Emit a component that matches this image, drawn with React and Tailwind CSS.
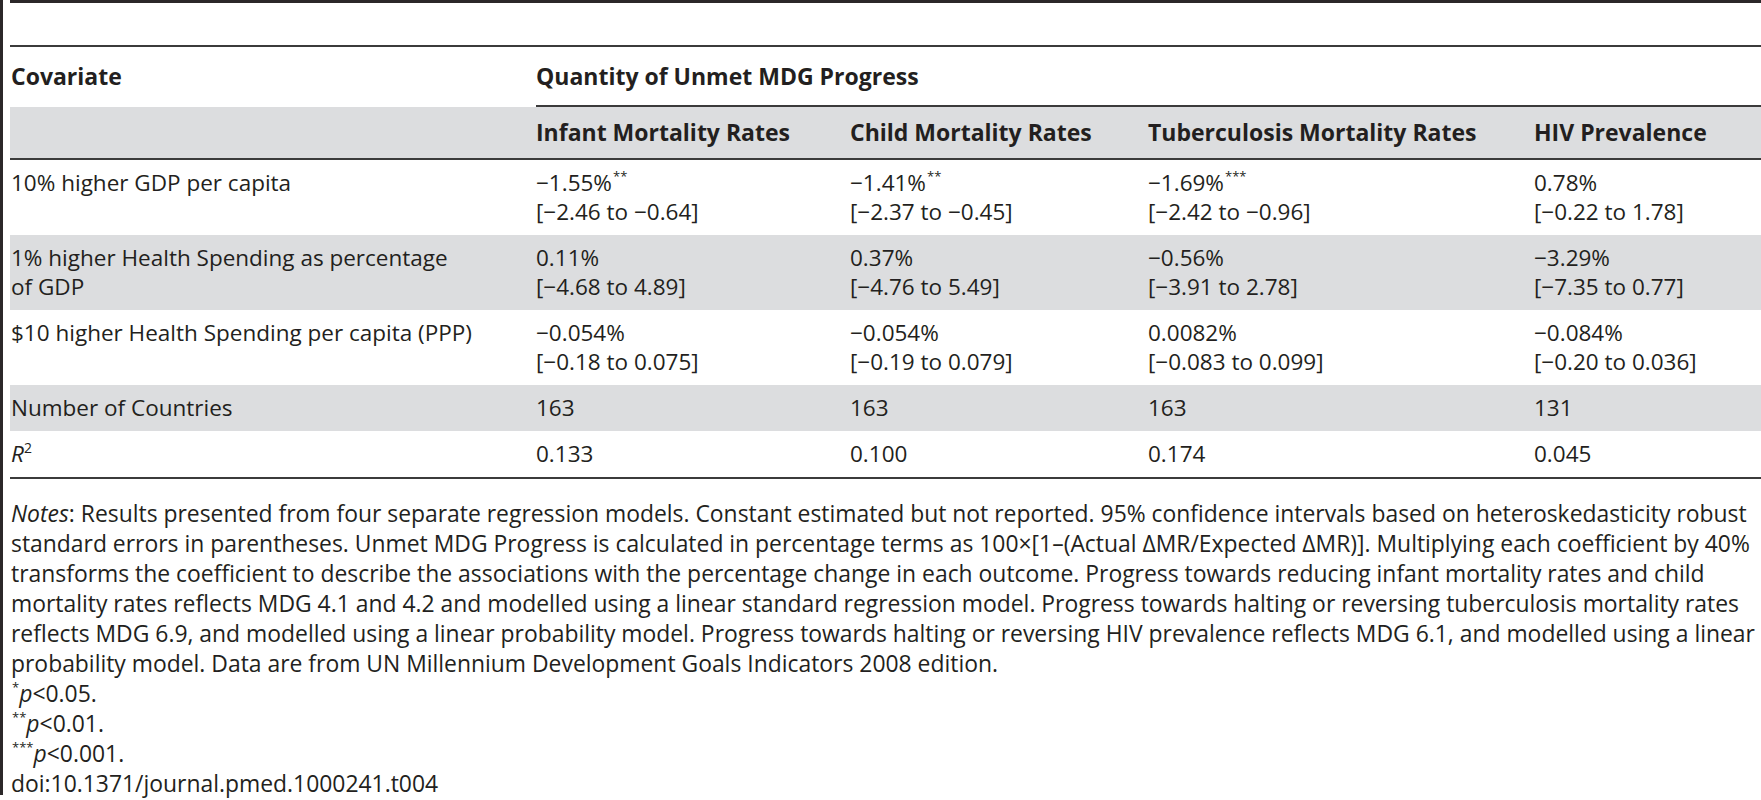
import React from 'react';

const cols = 'grid grid-cols-[526px_314px_298px_386px_1fr]';

const rows = [
  {
    label: ['10% higher GDP per capita'],
    shade: false,
    cells: [
      { v: '−1.55%', sup: '**', ci: '[−2.46 to −0.64]' },
      { v: '−1.41%', sup: '**', ci: '[−2.37 to −0.45]' },
      { v: '−1.69%', sup: '***', ci: '[−2.42 to −0.96]' },
      { v: '0.78%', ci: '[−0.22 to 1.78]' },
    ],
  },
  {
    label: ['1% higher Health Spending as percentage', 'of GDP'],
    shade: true,
    cells: [
      { v: '0.11%', ci: '[−4.68 to 4.89]' },
      { v: '0.37%', ci: '[−4.76 to 5.49]' },
      { v: '−0.56%', ci: '[−3.91 to 2.78]' },
      { v: '−3.29%', ci: '[−7.35 to 0.77]' },
    ],
  },
  {
    label: ['$10 higher Health Spending per capita (PPP)'],
    shade: false,
    cells: [
      { v: '−0.054%', ci: '[−0.18 to 0.075]' },
      { v: '−0.054%', ci: '[−0.19 to 0.079]' },
      { v: '0.0082%', ci: '[−0.083 to 0.099]' },
      { v: '−0.084%', ci: '[−0.20 to 0.036]' },
    ],
  },
];

const notes = [
  'standard errors in parentheses. Unmet MDG Progress is calculated in percentage terms as 100×[1–(Actual ΔMR/Expected ΔMR)]. Multiplying each coefficient by 40%',
  'transforms the coefficient to describe the associations with the percentage change in each outcome. Progress towards reducing infant mortality rates and child',
  'mortality rates reflects MDG 4.1 and 4.2 and modelled using a linear standard regression model. Progress towards halting or reversing tuberculosis mortality rates',
  'reflects MDG 6.9, and modelled using a linear probability model. Progress towards halting or reversing HIV prevalence reflects MDG 6.1, and modelled using a linear',
  'probability model. Data are from UN Millennium Development Goals Indicators 2008 edition.',
];

function Sup({ children }) {
  return <sup className="text-[13px] -top-[10px] ml-[1px]">{children}</sup>;
}

export default function App() {
  return (
    <div className="w-[1761px] h-[800px] bg-white flex overflow-hidden font-['Open_Sans',sans-serif] text-[#231f20]">
      <div className="w-[3px] h-[795px] bg-[#2b2829] shrink-0" />
      <div className="ml-[7px] flex-1 flex flex-col min-w-0">
        <div className="h-[3px] bg-[#2b2829]" />

        {/* Table */}
        <div className="mt-[42px] border-t-2 border-[#3b3b3b] text-[22.5px] leading-[29px]">
          <div className={`${cols} text-[23px]`}>
            <div className="pl-[1px] pt-[15px] pb-[14px] font-bold">Covariate</div>
            <div className="col-span-4 pt-[15px] pb-[14px] font-bold border-b-2 border-[#3b3b3b]">
              Quantity of Unmet MDG Progress
            </div>
          </div>
          <div className={`${cols} bg-[#dcdddf] border-b-2 border-[#3b3b3b] font-bold text-[23px]`}>
            <div className="py-[11px]" />
            <div className="py-[11px]">Infant Mortality Rates</div>
            <div className="py-[11px]">Child Mortality Rates</div>
            <div className="py-[11px]">Tuberculosis Mortality Rates</div>
            <div className="py-[11px]">HIV Prevalence</div>
          </div>

          {rows.map((r, i) => (
            <div key={i} className={`${cols} ${r.shade ? 'bg-[#dcdddf]' : ''}`}>
              <div className="pl-[1px] pt-[8px] pb-[9px]">
                {r.label.map((l) => (
                  <div key={l}>{l}</div>
                ))}
              </div>
              {r.cells.map((c, j) => (
                <div key={j} className="pt-[8px] pb-[9px]">
                  <div>
                    {c.v}
                    {c.sup && <Sup>{c.sup}</Sup>}
                  </div>
                  <div>{c.ci}</div>
                </div>
              ))}
            </div>
          ))}

          <div className={`${cols} bg-[#dcdddf]`}>
            <div className="pl-[1px] pt-[8px] pb-[9px]">Number of Countries</div>
            <div className="pt-[8px] pb-[9px]">163</div>
            <div className="pt-[8px] pb-[9px]">163</div>
            <div className="pt-[8px] pb-[9px]">163</div>
            <div className="pt-[8px] pb-[9px]">131</div>
          </div>
          <div className={`${cols} border-b-2 border-[#3b3b3b]`}>
            <div className="pl-[1px] pt-[8px] pb-[9px]">
              <i>R</i>
              <sup className="text-[14px] -top-[9px]">2</sup>
            </div>
            <div className="pt-[8px] pb-[9px]">0.133</div>
            <div className="pt-[8px] pb-[9px]">0.100</div>
            <div className="pt-[8px] pb-[9px]">0.174</div>
            <div className="pt-[8px] pb-[9px]">0.045</div>
          </div>
        </div>

        {/* Notes */}
        <div className="mt-[20px] text-[22.9px] leading-[30px] whitespace-nowrap pl-[1px]">
          <div>
            <i>Notes</i>: Results presented from four separate regression models. Constant estimated but not reported. 95% confidence intervals based on heteroskedasticity robust
          </div>
          {notes.map((n) => (
            <div key={n}>{n}</div>
          ))}
          <div>
            <Sup>*</Sup>
            <i>p</i>&lt;0.05.
          </div>
          <div>
            <Sup>**</Sup>
            <i>p</i>&lt;0.01.
          </div>
          <div>
            <Sup>***</Sup>
            <i>p</i>&lt;0.001.
          </div>
          <div>doi:10.1371/journal.pmed.1000241.t004</div>
        </div>
      </div>
    </div>
  );
}
